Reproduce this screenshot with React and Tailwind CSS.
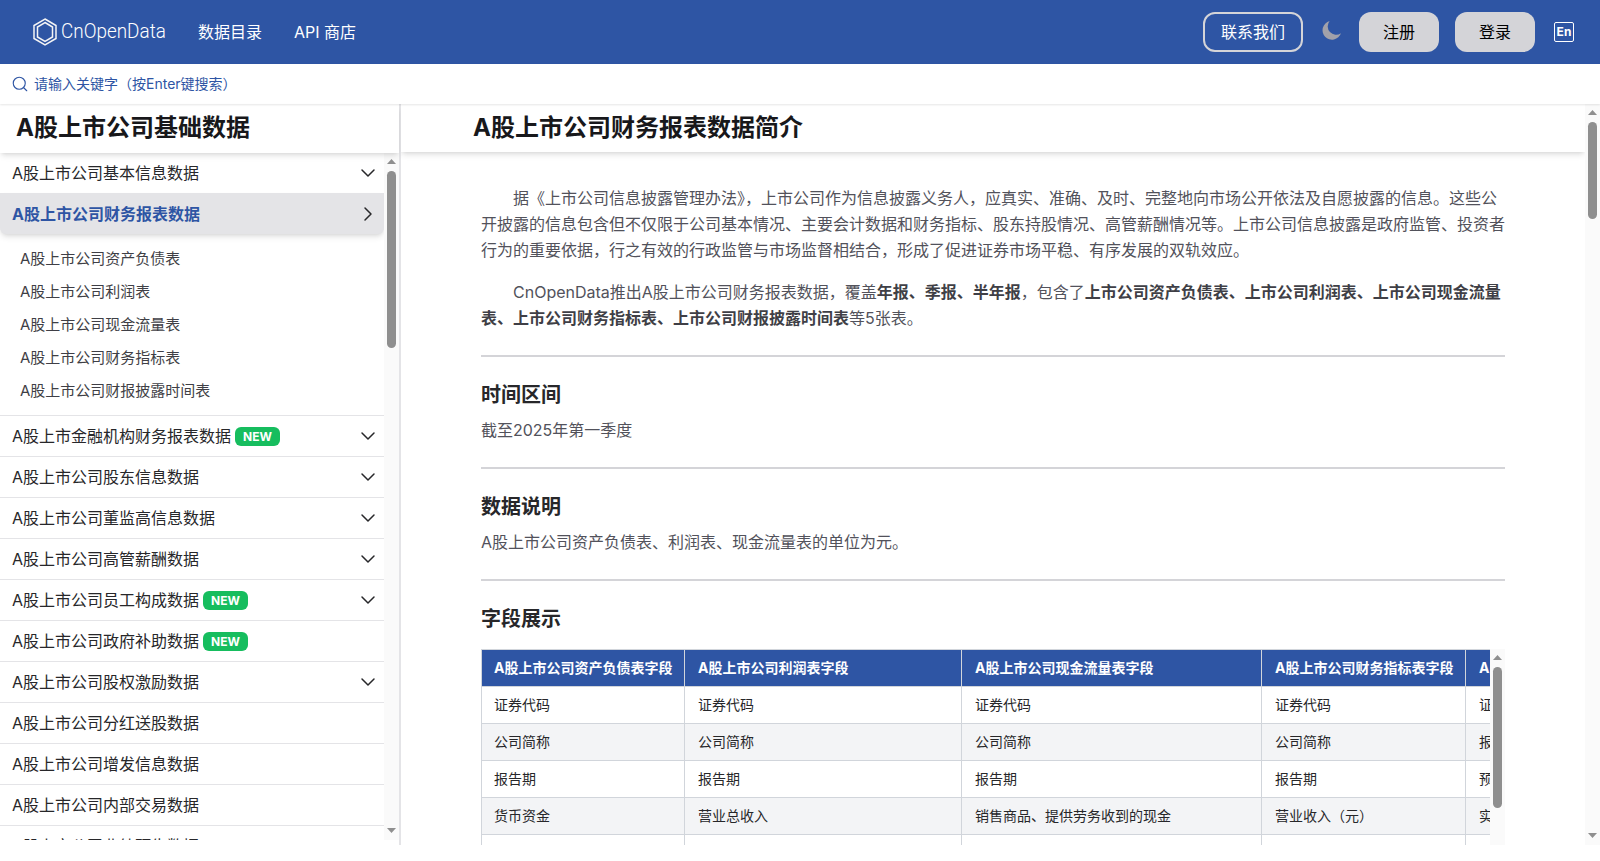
import React from "react";
import { ChevronDown, ChevronRight, Search } from "lucide-react";

const FONT = "font-['Inter','Noto_Sans_CJK_SC',sans-serif]";

function Scrollbar({ thumbClass }) {
  return (
    <div className="flex h-full w-[15px] shrink-0 flex-col items-center bg-[#fafafa]">
      <svg className="mt-[6px] shrink-0" width="9" height="5" viewBox="0 0 9 5" fill="#8f8f8f">
        <path d="M4.5 0 L9 5 H0 Z" />
      </svg>
      <div className={`w-[9px] shrink-0 rounded-full bg-[#8f8f8f] ${thumbClass}`} />
      <svg className="mt-auto mb-[7px] shrink-0" width="9" height="5" viewBox="0 0 9 5" fill="#8f8f8f">
        <path d="M0 0 H9 L4.5 5 Z" />
      </svg>
    </div>
  );
}

function NewBadge() {
  return (
    <span className="ml-1 inline-flex h-[19px] items-center rounded-md bg-[#16bd5e] px-2 pt-px text-xs font-bold text-white">
      NEW
    </span>
  );
}

function Row({ label, isNew, chevron = true }) {
  return (
    <div className="flex h-[41px] items-center justify-between border-b border-[#e4e4e7] pl-3 pr-1 text-[#27272a]">
      <div className="flex items-center">
        <span>{label}</span>
        {isNew && <NewBadge />}
      </div>
      {chevron && <ChevronDown size={24} strokeWidth={1.5} className="text-[#27272a]" />}
    </div>
  );
}

const subItems = [
  "A股上市公司资产负债表",
  "A股上市公司利润表",
  "A股上市公司现金流量表",
  "A股上市公司财务指标表",
  "A股上市公司财报披露时间表",
];

const rowsAfter = [
  { label: "A股上市金融机构财务报表数据", isNew: true },
  { label: "A股上市公司股东信息数据" },
  { label: "A股上市公司董监高信息数据" },
  { label: "A股上市公司高管薪酬数据" },
  { label: "A股上市公司员工构成数据", isNew: true },
  { label: "A股上市公司政府补助数据", isNew: true, chevron: false },
  { label: "A股上市公司股权激励数据" },
  { label: "A股上市公司分红送股数据", chevron: false },
  { label: "A股上市公司增发信息数据", chevron: false },
  { label: "A股上市公司内部交易数据", chevron: false },
  { label: "A股上市公司业绩预告数据", chevron: false },
];

const tableHead = [
  "A股上市公司资产负债表字段",
  "A股上市公司利润表字段",
  "A股上市公司现金流量表字段",
  "A股上市公司财务指标表字段",
  "A股上市公司财报披露时间表字段",
];

const tableRows = [
  ["证券代码", "证券代码", "证券代码", "证券代码", "证券代码"],
  ["公司简称", "公司简称", "公司简称", "公司简称", "报告期"],
  ["报告期", "报告期", "报告期", "报告期", "预约披露日期"],
  ["货币资金", "营业总收入", "销售商品、提供劳务收到的现金", "营业收入（元）", "实际披露日期"],
  ["结算备付金", "营业收入", "客户存款和同业存放款项净增加额", "营业收入同比增长", ""],
];

function Sidebar() {
  return (
    <aside className="flex h-full w-[401px] shrink-0 flex-col border-r-2 border-[#e4e4e7]">
      <div className="relative z-10 flex h-[49px] shrink-0 items-center bg-white pb-[2px] pl-4 text-2xl font-bold text-[#18181b] shadow-md">
        A股上市公司基础数据
      </div>
      <div className="flex h-[687px] shrink-0">
        <div className="min-w-0 flex-1 overflow-hidden">
          <div className="flex h-10 items-center justify-between pl-3 pr-1 text-[#27272a]">
            <span>A股上市公司基本信息数据</span>
            <ChevronDown size={24} strokeWidth={1.5} />
          </div>
          <div className="flex h-[41px] items-center justify-between rounded-b-md bg-[#e4e4e7] pl-3 pr-1 font-bold text-[#2e55a4] shadow-md">
            <span>A股上市公司财务报表数据</span>
            <ChevronRight size={24} strokeWidth={1.5} className="text-[#27272a]" />
          </div>
          <div className="border-b border-[#e4e4e7] pt-[9px] pb-[7px] pl-5">
            {subItems.map((s) => (
              <div key={s} className="flex h-[33px] items-center text-[15px] text-[#3f3f46]">
                {s}
              </div>
            ))}
          </div>
          {rowsAfter.map((r) => (
            <Row key={r.label} {...r} />
          ))}
        </div>
        <Scrollbar thumbClass="mt-[7px] h-[177px]" />
      </div>
    </aside>
  );
}

function Section({ title, children }) {
  return (
    <section>
      <hr className="my-0 border-t-2 border-[#d4d4d8]" />
      <h2 className="mt-6 text-xl font-bold leading-7 text-[#27272a]">{title}</h2>
      {children}
    </section>
  );
}

function DataTable() {
  return (
    <div className="mt-4 flex h-[400px]">
      <div className="min-w-0 flex-1 overflow-hidden">
        <table className="w-[1299px] table-fixed border-collapse text-sm text-[#27272a]">
          <colgroup>
            <col className="w-[203px]" />
            <col className="w-[277px]" />
            <col className="w-[300px]" />
            <col className="w-[204px]" />
            <col className="w-[315px]" />
          </colgroup>
          <thead>
            <tr className="h-[37px] bg-[#2e55a4] text-left font-bold text-white">
              {tableHead.map((h) => (
                <th key={h} className="overflow-hidden whitespace-nowrap border border-[#d1d5db] pl-[13px] font-bold first:pl-3">
                  {h}
                </th>
              ))}
            </tr>
          </thead>
          <tbody>
            {tableRows.map((row, i) => (
              <tr key={i} className={`h-[37px] ${i % 2 === 1 ? "bg-[#f3f4f6]" : "bg-white"}`}>
                {row.map((c, j) => (
                  <td key={j} className="overflow-hidden whitespace-nowrap border border-[#d1d5db] pl-[13px] first:pl-3">
                    {c}
                  </td>
                ))}
              </tr>
            ))}
          </tbody>
        </table>
      </div>
      <Scrollbar thumbClass="mt-[7px] h-[141px]" />
    </div>
  );
}

function Main() {
  return (
    <div className="flex h-full min-w-0 flex-1">
      <main className="h-full min-w-0 flex-1 overflow-hidden">
        <div className="relative z-10 flex h-12 items-center bg-white pl-[72px] text-2xl font-bold text-[#18181b] shadow-md">
          A股上市公司财务报表数据简介
        </div>
        <div className="mx-20 pt-[33px] leading-[26px] text-[#52525b]">
          <p className="indent-8">
            据《上市公司信息披露管理办法》，上市公司作为信息披露义务人，应真实、准确、及时、完整地向市场公开依法及自愿披露的信息。这些公开披露的信息包含但不仅限于公司基本情况、主要会计数据和财务指标、股东持股情况、高管薪酬情况等。上市公司信息披露是政府监管、投资者行为的重要依据，行之有效的行政监管与市场监督相结合，形成了促进证券市场平稳、有序发展的双轨效应。
          </p>
          <p className="mt-4 mb-6 indent-8">
            CnOpenData推出A股上市公司财务报表数据，覆盖<b className="font-bold text-[#3f3f46]">年报、季报、半年报</b>，包含了<b className="font-bold text-[#3f3f46]">上市公司资产负债表、上市公司利润表、上市公司现金流量表、上市公司财务指标表、上市公司财报披露时间表</b>等5张表。
          </p>
          <Section title="时间区间">
            <p className="mt-2 mb-6">截至2025年第一季度</p>
          </Section>
          <Section title="数据说明">
            <p className="mt-2 mb-6">A股上市公司资产负债表、利润表、现金流量表的单位为元。</p>
          </Section>
          <Section title="字段展示">
            <DataTable />
          </Section>
        </div>
      </main>
      <Scrollbar thumbClass="mt-[7px] h-[97px]" />
    </div>
  );
}

export default function App() {
  return (
    <div className={`${FONT} h-[861px] overflow-hidden bg-white text-base`}>
      <header className="flex h-16 items-center justify-between bg-[#2e55a4] pl-[33px] pr-[26px] text-white">
        <div className="flex items-center">
          <div className="flex items-center">
            <svg width="24" height="28" viewBox="0 0 24 28" fill="none" stroke="#f4f4f5" strokeWidth="1.5">
              <path d="M12 1 L23 7.5 V20.5 L12 27 L1 20.5 V7.5 Z" />
              <path d="M12 4.5 L19.5 9 V19 L12 23.5 L4.5 19 V9 Z" />
            </svg>
            <span className="ml-[4px] w-[103px] origin-left scale-x-[0.9] whitespace-nowrap font-['Roboto',sans-serif] text-[21px] font-light">CnOpenData</span>
          </div>
          <span className="ml-[34px]">数据目录</span>
          <span className="ml-8">API 商店</span>
        </div>
        <div className="flex items-center">
          <button className="h-10 w-[100px] rounded-xl border-2 border-[#d4d4d8]">联系我们</button>
          <svg className="ml-[18px] mb-1" width="21" height="21" viewBox="0 0 20 20" fill="#a1a1aa">
            <path d="M8.2 1 A9 9 0 1 0 19 12.6 A8 8 0 0 1 8.2 1 Z" />
          </svg>
          <button className="ml-[17px] h-10 w-20 rounded-xl bg-[#d4d4d8] text-black">注册</button>
          <button className="ml-4 h-10 w-20 rounded-xl bg-[#d4d4d8] text-black">登录</button>
          <span className="ml-[19px] flex h-5 w-5 items-center justify-center rounded-[2px] border-[1.5px] border-white text-xs font-bold">
            En
          </span>
        </div>
      </header>
      <div className="relative z-20 flex h-10 items-center pl-[11px] text-sm text-[#2e55a4] shadow-[0_1px_2px_rgba(0,0,0,0.1)]">
        <Search size={18} strokeWidth={1.5} />
        <span className="ml-[5px]">请输入关键字（按Enter键搜索）</span>
      </div>
      <div className="flex h-[741px]">
        <Sidebar />
        <Main />
      </div>
    </div>
  );
}
